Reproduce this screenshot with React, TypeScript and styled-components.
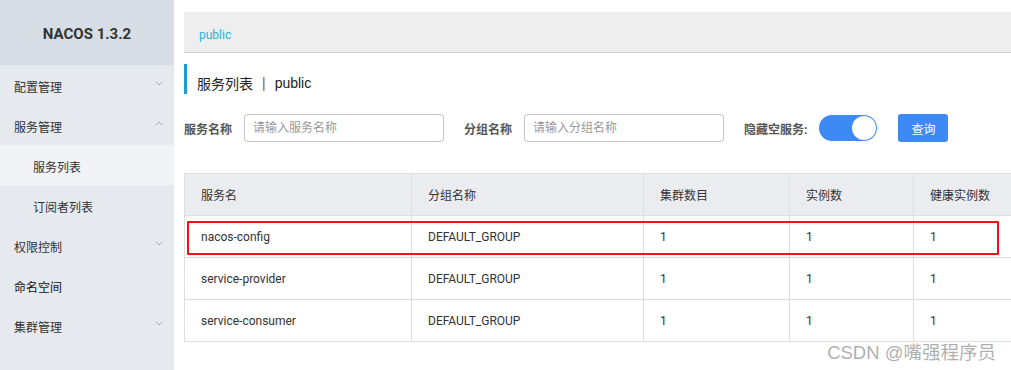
import React from 'react';
import styled, { createGlobalStyle } from 'styled-components';

const FONT = `Roboto, "Noto Sans CJK SC", "Noto Sans", sans-serif`;

const GlobalStyle = createGlobalStyle`
  html, body {
    margin: 0;
    padding: 0;
    width: 1011px;
    height: 370px;
    overflow: hidden;
    background: #fff;
    font-family: ${FONT};
    color: #333;
  }
  * { box-sizing: border-box; }
`;

type MenuEntry = { label: string; level: number; arrow?: 'down' | 'up'; active?: boolean; strong?: boolean };

const MENU: MenuEntry[] = [
  { label: '配置管理', level: 0, arrow: 'down' },
  { label: '服务管理', level: 0, arrow: 'up' },
  { label: '服务列表', level: 1, active: true },
  { label: '订阅者列表', level: 1 },
  { label: '权限控制', level: 0, arrow: 'down' },
  { label: '命名空间', level: 0, strong: true },
  { label: '集群管理', level: 0, arrow: 'down' },
];

const COLUMNS = [
  { title: '服务名', width: 227 },
  { title: '分组名称', width: 232 },
  { title: '集群数目', width: 146 },
  { title: '实例数', width: 124 },
  { title: '健康实例数', width: 130 },
];

const ROWS = [
  ['nacos-config', 'DEFAULT_GROUP', '1', '1', '1'],
  ['service-provider', 'DEFAULT_GROUP', '1', '1', '1'],
  ['service-consumer', 'DEFAULT_GROUP', '1', '1', '1'],
];

const Layout = styled.div`
  display: flex;
  width: 1011px;
  height: 370px;
  position: relative;
`;

const Sidebar = styled.aside`
  width: 174px;
  flex-shrink: 0;
  background: #e6e9ee;
  display: flex;
  flex-direction: column;
`;

const Brand = styled.div`
  height: 65px;
  background: #d6dde4;
  display: flex;
  align-items: center;
  justify-content: center;
  font-size: 15px;
  font-weight: 700;
  color: #333;
  padding-top: 2px;
`;

const Menu = styled.ul`
  list-style: none;
  margin: 0;
  padding: 0;
`;

const MenuItem = styled.li<{ $level: number; $active?: boolean; $strong?: boolean }>`
  height: 40px;
  display: flex;
  align-items: center;
  justify-content: space-between;
  padding: 3px 11px 0 ${({ $level }) => ($level ? 33 : 14)}px;
  font-size: 12px;
  color: ${({ $strong }) => ($strong ? '#111' : '#333')};
  background: ${({ $active }) => ($active ? '#f1f3f6' : 'transparent')};
`;

const Chevron = ({ up }: { up?: boolean }) => (
  <svg width="8" height="5" viewBox="0 0 8 5" style={{ marginTop: -6 }}>
    <polyline
      points={up ? '0.5,4.5 4,1 7.5,4.5' : '0.5,0.5 4,4 7.5,0.5'}
      fill="none"
      stroke="#9aa0a8"
      strokeWidth="0.9"
    />
  </svg>
);

const Main = styled.main`
  flex: 1;
  min-width: 0;
  padding: 12px 0 0 10px;
  overflow: hidden;
`;

const Breadcrumb = styled.div`
  height: 41px;
  background: #eeeeee;
  border-bottom: 1px solid #cfcfcf;
  display: flex;
  align-items: center;
  padding: 5px 0 0 15px;
  font-size: 12px;
  color: #1fb3dd;
`;

const Title = styled.h2`
  margin: 11px 0 0;
  height: 30px;
  border-left: 3px solid #1c9dd6;
  padding: 7px 0 0 10px;
  display: flex;
  align-items: center;
  font-size: 14px;
  font-weight: 400;
  color: #222;
  font-family: "Liberation Sans", "Noto Sans CJK SC", sans-serif;
`;

const Sep = styled.span`
  margin: 0 9px;
  color: #8a5a1a;
`;

const Form = styled.div`
  margin-top: 20px;
  height: 28px;
  display: flex;
  align-items: center;
`;

const Field = styled.label`
  display: flex;
  align-items: center;
  gap: 12px;
  margin-right: 20px;
`;

const Label = styled.span`
  font-size: 12px;
  font-weight: 700;
  color: #555;
  white-space: nowrap;
`;

const Input = styled.input`
  width: 200px;
  height: 28px;
  border: 1px solid #c4c6cf;
  border-radius: 3px;
  padding: 0 8px;
  font-size: 12px;
  font-family: ${FONT};
  outline: none;
  &::placeholder { color: #999; }
`;

const Toggle = styled.span<{ $on: boolean }>`
  width: 58px;
  height: 26px;
  border-radius: 13px;
  background: ${({ $on }) => ($on ? '#3d8af7' : '#ccc')};
  display: flex;
  align-items: center;
  justify-content: ${({ $on }) => ($on ? 'flex-end' : 'flex-start')};
  padding: 1px;
  &::after {
    content: '';
    width: 24px;
    height: 24px;
    border-radius: 50%;
    background: #fff;
  }
`;

const Button = styled.button`
  margin-left: 1px;
  width: 50px;
  height: 28px;
  border: none;
  border-radius: 3px;
  background: #3d8af7;
  color: #fff;
  font-size: 12px;
  font-family: ${FONT};
`;

const TableWrap = styled.div`
  position: relative;
  margin-top: 31px;
`;

const Table = styled.table`
  border-collapse: collapse;
  table-layout: fixed;
  width: 859px;
  font-size: 12px;
  color: #333;
`;

const Th = styled.th`
  height: 42px;
  background: #ebecf0;
  border: 1px solid #dcdee3;
  text-align: left;
  font-weight: 400;
  padding: 0 16px;
`;

const Td = styled.td`
  height: 42px;
  border: 1px solid #dcdee3;
  padding: 0 16px;
`;

const Highlight = styled.div`
  position: absolute;
  left: 3px;
  top: 48px;
  width: 812px;
  height: 34px;
  border: 2px solid #f31212;
  border-radius: 1px;
  pointer-events: none;
`;

const Watermark = styled.div`
  position: absolute;
  right: 15px;
  bottom: 6px;
  font-size: 18.5px;
  color: rgba(120, 120, 120, 0.6);
  font-family: "Liberation Sans", "Noto Sans CJK SC", sans-serif;
`;

export default function App() {
  return (
    <>
      <GlobalStyle />
      <Layout>
        <Sidebar>
          <Brand>NACOS 1.3.2</Brand>
          <Menu>
            {MENU.map((m) => (
              <MenuItem key={m.label} $level={m.level} $active={m.active} $strong={m.strong}>
                <span>{m.label}</span>
                {m.arrow && <Chevron up={m.arrow === 'up'} />}
              </MenuItem>
            ))}
          </Menu>
        </Sidebar>
        <Main>
          <Breadcrumb>public</Breadcrumb>
          <Title>
            服务列表<Sep>|</Sep>public
          </Title>
          <Form>
            <Field>
              <Label>服务名称</Label>
              <Input placeholder="请输入服务名称" />
            </Field>
            <Field>
              <Label>分组名称</Label>
              <Input placeholder="请输入分组名称" />
            </Field>
            <Field>
              <Label>隐藏空服务:</Label>
              <Toggle $on />
            </Field>
            <Button>查询</Button>
          </Form>
          <TableWrap>
            <Table>
              <colgroup>
                {COLUMNS.map((c) => (
                  <col key={c.title} style={{ width: c.width }} />
                ))}
              </colgroup>
              <thead>
                <tr>
                  {COLUMNS.map((c) => (
                    <Th key={c.title}>{c.title}</Th>
                  ))}
                </tr>
              </thead>
              <tbody>
                {ROWS.map((r) => (
                  <tr key={r[0]}>
                    {r.map((v, i) => (
                      <Td key={i}>{v}</Td>
                    ))}
                  </tr>
                ))}
              </tbody>
            </Table>
            <Highlight />
          </TableWrap>
        </Main>
        <Watermark>CSDN @嘴强程序员</Watermark>
      </Layout>
    </>
  );
}
